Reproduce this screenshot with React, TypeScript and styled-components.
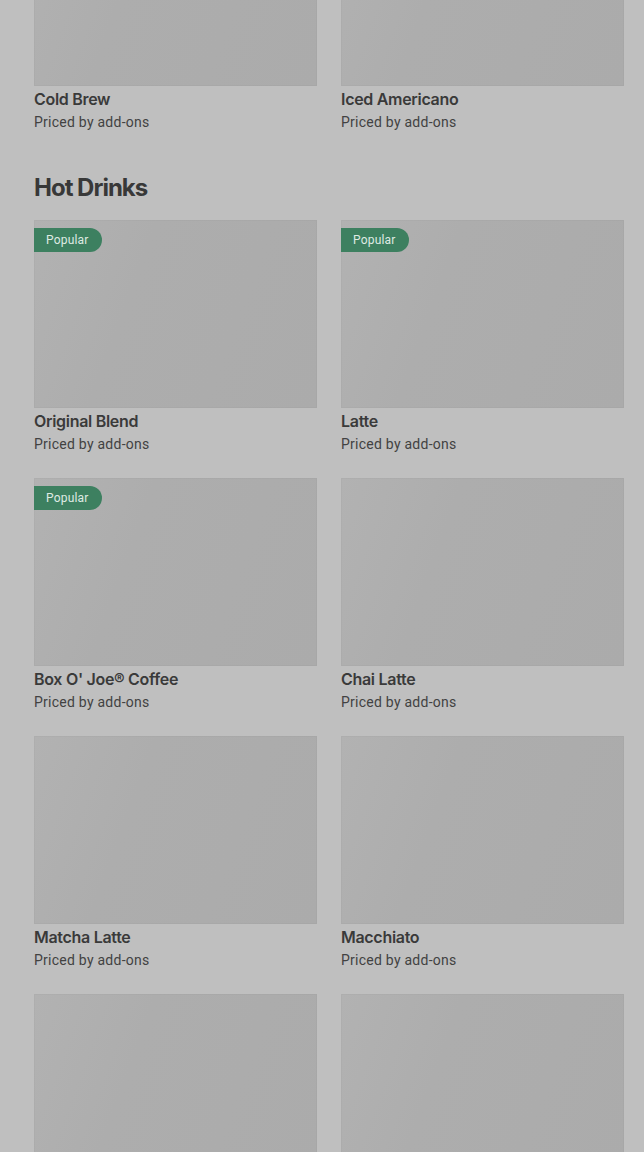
import React from "react";
import styled, { createGlobalStyle } from "styled-components";

const Global = createGlobalStyle`
  html, body { margin: 0; padding: 0; background: #bfbfbf; }
  body { font-family: Roboto, "Noto Sans", Arial, sans-serif; overflow: hidden; }
`;

const Page = styled.div`
  padding: 0 20px 0 34px;
  margin-top: -102px;
  background: #bfbfbf;
  min-height: 1300px;
`;

const Section = styled.section`
  & + & { margin-top: 40px; }
`;

const Heading = styled.h2`
  margin: 0 0 16px;
  font-family: Inter, "Noto Sans", sans-serif;
  font-size: 24px;
  font-weight: 700;
  letter-spacing: -1px;
  line-height: 32px;
  color: #383838;
`;

const Grid = styled.div`
  display: grid;
  grid-template-columns: 1fr 1fr;
  column-gap: 24px;
  row-gap: 24px;
`;

const Card = styled.div`
  display: flex;
  flex-direction: column;
`;

const Thumb = styled.div`
  position: relative;
  height: 188px;
  background: linear-gradient(110deg, #b2b2b2 0%, #adadad 35%, #ababab 100%);
  box-shadow: inset 0 0 0 1px rgba(0, 0, 0, 0.02);
`;

const Badge = styled.span`
  position: absolute;
  top: 8px;
  left: 0;
  height: 24px;
  padding: 0 13px 0 12px;
  display: flex;
  align-items: center;
  border-radius: 0 12px 12px 0;
  background: #3d8060;
  color: #dfeae3;
  font-size: 12px;
  letter-spacing: 0.2px;
  font-family: Roboto, sans-serif;
`;

const Name = styled.div`
  margin-top: 2px;
  font-family: Inter, Roboto, sans-serif;
  font-size: 16px;
  font-weight: 600;
  line-height: 22px;
  color: #3a3a3a;
  letter-spacing: -0.3px;
`;

const Price = styled.div`
  margin-top: 2px;
  font-size: 14px;
  line-height: 20px;
  color: #424242;
  letter-spacing: 0.25px;
`;

type Item = { id: string; name?: string; popular?: boolean };

const Product = ({ name, popular }: Item) => (
  <Card>
    <Thumb>{popular && <Badge>Popular</Badge>}</Thumb>
    {name && <Name>{name}</Name>}
    {name && <Price>Priced by add-ons</Price>}
  </Card>
);

const iced: Item[] = [
  { id: "cb", name: "Cold Brew" },
  { id: "ia", name: "Iced Americano" },
];
const hot: Item[] = [
  { id: "ob", name: "Original Blend", popular: true },
  { id: "la", name: "Latte", popular: true },
  { id: "bj", name: "Box O' Joe® Coffee", popular: true },
  { id: "cl", name: "Chai Latte" },
  { id: "ml", name: "Matcha Latte" },
  { id: "mc", name: "Macchiato" },
  { id: "x1" },
  { id: "x2" },
];

export default function App() {
  return (
    <>
      <Global />
      <Page>
        <Section>
          <Grid>
            {iced.map((i) => (
              <Product key={i.id} {...i} />
            ))}
          </Grid>
        </Section>
        <Section>
          <Heading>Hot Drinks</Heading>
          <Grid>
            {hot.map((i) => (
              <Product key={i.id} {...i} />
            ))}
          </Grid>
        </Section>
      </Page>
    </>
  );
}
